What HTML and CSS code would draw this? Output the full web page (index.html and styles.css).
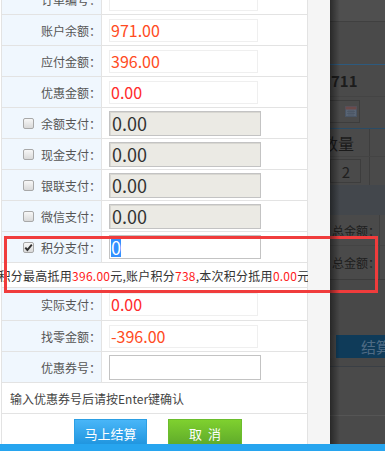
FILE: index.html
```html
<!DOCTYPE html>
<html lang="zh-CN">
<head>
<meta charset="utf-8">
<title>结算</title>
<link rel="stylesheet" href="styles.css">
</head>
<body>
<div class="screen">
  <div class="main">
    <div class="sheet">
      <div class="table">
        <div class="row"><div class="lab">订单编号：</div><div class="val"><span class="box"></span></div></div>
        <div class="row"><div class="lab">账户余额：</div><div class="val"><span class="box">971.00</span></div></div>
        <div class="row"><div class="lab">应付金额：</div><div class="val"><span class="box">396.00</span></div></div>
        <div class="row"><div class="lab">优惠金额：</div><div class="val"><span class="box red">0.00</span></div></div>
        <div class="row"><div class="lab"><span class="cb"></span>余额支付：</div><div class="val"><span class="inp dis">0.00</span></div></div>
        <div class="row"><div class="lab"><span class="cb"></span>现金支付：</div><div class="val"><span class="inp dis">0.00</span></div></div>
        <div class="row"><div class="lab"><span class="cb"></span>银联支付：</div><div class="val"><span class="inp dis">0.00</span></div></div>
        <div class="row"><div class="lab"><span class="cb"></span>微信支付：</div><div class="val"><span class="inp dis">0.00</span></div></div>
        <div class="row"><div class="lab"><span class="cb"><svg width="9" height="9" viewBox="0 0 9 9"><path d="M1.3 4.6 L3.4 7 L7.8 1.6" fill="none" stroke="#2e2e2e" stroke-width="1.9"/></svg></span>积分支付：</div><div class="val"><span class="inp edit"><span class="sel">0</span></span></div></div>
        <div class="row note"><span>积分最高抵用<em>396.00</em>元,账户积分<em>738</em>,本次积分抵用<em>0.00</em>元</span></div>
        <div class="row tall"><div class="lab">实际支付：</div><div class="val"><span class="box red">0.00</span></div></div>
        <div class="row"><div class="lab">找零金额：</div><div class="val"><span class="box">-396.00</span></div></div>
        <div class="row"><div class="lab">优惠券号：</div><div class="val"><span class="inp coupon"></span></div></div>
        <div class="row hint">输入优惠券号后请按Enter键确认</div>
        <div class="actions">
          <button class="btn blue">马上结算</button>
          <button class="btn green">取&nbsp;&nbsp;消</button>
        </div>
      </div>
    </div>
    <div class="strip"></div>
    <div class="backdrop">
      <div class="d1"></div>
      <div class="d2"></div>
      <div class="d3">711</div>
      <div class="d4"><span class="date"><svg width="12" height="11" viewBox="0 0 12 11"><rect x="0.5" y="0.5" width="11" height="10" fill="#5f6f86" stroke="#4a5a70"/><rect x="0.5" y="0.5" width="11" height="3" fill="#7a4a4a"/><path d="M2 5.5h8M2 7.5h8M4 4v6M6 4v6M8 4v6" stroke="#4b5a6e" stroke-width="0.7"/></svg></span></div>
      <div class="d5"><div class="c1">数量</div><div class="c2"></div></div>
      <div class="d6"><div class="c1"><span class="qty">2</span></div><div class="c2"></div></div>
      <div class="d7"></div>
      <div class="d8"><span class="tl">总金额：</span></div>
      <div class="d9"><span class="tl">总金额：</span></div>
      <div class="d10"></div>
      <div class="dbtn">结算</div>
      <div class="d11"></div>
      <div class="d12"></div>
    </div>
  </div>
  <div class="bar"></div>
  <div class="mark"></div>
</div>
</body>
</html>
```
FILE: styles.css
```css
html, body {
  margin: 0;
  padding: 0;
}
body {
  font-family: "Noto Sans CJK SC", "Noto Sans", sans-serif;
  background: #ffffff;
}
.screen {
  position: relative;
  width: 385px;
  height: 451px;
  overflow: hidden;
  display: flex;
  flex-direction: column;
}
.main {
  height: 444px;
  display: flex;
  overflow: hidden;
}
.sheet {
  width: 308px;
  padding-left: 1px;
  box-sizing: border-box;
  background: #fff;
  overflow: hidden;
}
.table {
  margin-top: -16px;
  border-left: 1px solid #e3e3e3;
  border-right: 1px solid #e3e3e3;
}
.row {
  display: flex;
  height: 31px;
  box-sizing: border-box;
  border-bottom: 1px solid #e3e3e3;
}
.row.tall { height: 33px; }
.lab {
  width: 100px;
  box-sizing: border-box;
  border-right: 1px solid #e3e3e3;
  background: #f0f7fe;
  display: flex;
  align-items: center;
  justify-content: flex-end;
  font-size: 12px;
  color: #555;
  white-space: nowrap;
}
.cb {
  width: 11px;
  height: 11px;
  box-sizing: border-box;
  border: 1px solid #a8a8a8;
  border-radius: 2px;
  background: linear-gradient(#f7f7f7, #d9d9d9);
  margin-left: 21px;
  margin-right: auto;
  display: flex;
  align-items: center;
  justify-content: center;
}
.cb svg { display: block; }
.val {
  flex: 1;
  display: flex;
  align-items: center;
  padding-left: 7px;
}
.box {
  width: 149px;
  height: 23px;
  box-sizing: border-box;
  border: 1px solid #efefef;
  font-size: 16px;
  line-height: 21px;
  color: #ff4b22;
  padding-left: 1px;
}
.box.red { color: #ff2b2b; }
.inp {
  width: 152px;
  height: 25px;
  box-sizing: border-box;
  border: 1px solid #c3c3c3;
  font-size: 18px;
  line-height: 23px;
  color: #333;
  padding-left: 2px;
}
.inp.dis {
  background: #ebeae4;
  box-shadow: inset 1px 1px 0 #d8d7d1;
}
.inp.edit {
  height: 24px;
  background: #fff;
  line-height: 22px;
  padding-left: 1px;
}
.sel {
  background: #3390ff;
  color: #fff;
  display: inline-block;
  line-height: 20px;
  width: 10px;
}
.inp.coupon { background: #fff; }
.note {
  height: 25px;
  justify-content: center;
  align-items: center;
  white-space: nowrap;
  font-size: 12px;
  color: #333;
}
.note span {
  flex-shrink: 0;
  margin-left: -1px;
  letter-spacing: 0.25px;
}
.note em {
  font-style: normal;
  color: #ff1a1a;
}
.hint {
  align-items: center;
  padding-left: 8px;
  font-size: 12px;
  color: #444;
}
.actions {
  display: flex;
  gap: 21px;
  padding: 5px 0 0 72px;
}
.btn {
  width: 73px;
  height: 29px;
  border: 1px solid transparent;
  font-family: "Noto Sans CJK SC", sans-serif;
  font-size: 13px;
  color: #fff;
  padding: 0;
}
.btn.blue {
  background: linear-gradient(#49b6f8, #1c92dc);
  border-color: #2b9fe4;
}
.btn.green {
  width: 74px;
  background: linear-gradient(#7fd02f, #5ca72a);
  border-color: #6bbd2d;
}
.strip {
  width: 22px;
  background: #f5f5f5;
}
.backdrop {
  flex: 1;
  position: relative;
  background: #4a4a4a;
  display: flex;
  flex-direction: column;
  overflow: hidden;
  font-family: "Noto Sans CJK SC", sans-serif;
}
.backdrop::before {
  content: "";
  position: absolute;
  left: 0;
  top: 0;
  bottom: 0;
  width: 10px;
  background: linear-gradient(to right, rgba(0,0,0,0.45), rgba(0,0,0,0));
  z-index: 2;
}
.d1 {
  height: 22px;
  box-sizing: border-box;
  background: #4f4f4f;
  border-bottom: 1px solid #404040;
}
.d2 {
  height: 43px;
  box-sizing: border-box;
  border-bottom: 1px solid #2d5a7e;
}
.d3 {
  height: 32px;
  box-sizing: border-box;
  border-bottom: 1px solid #444;
  display: flex;
  align-items: center;
  font-size: 15px;
  font-weight: bold;
  color: #1c1c1c;
  padding-left: 1px;
}
.d4 {
  height: 32px;
  box-sizing: border-box;
  border-bottom: 1px solid #2a4c66;
  padding-top: 3px;
}
.date {
  display: flex;
  justify-content: flex-end;
  align-items: center;
  width: 38px;
  height: 23px;
  margin-left: -8px;
  box-sizing: border-box;
  border: 1px solid #3d3d3d;
  padding-right: 2px;
}
.date svg { opacity: 0.7; }
.d5, .d6 {
  height: 28px;
  box-sizing: border-box;
  display: flex;
}
.d5 { border-bottom: 1px solid #444; }
.c1 {
  width: 40px;
  box-sizing: border-box;
  border-right: 1px solid #3e3e3e;
  display: flex;
  align-items: center;
}
.d5 .c1 {
  font-size: 16px;
  color: #1a1a1a;
  margin-left: -8px;
  width: 48px;
}
.qty {
  width: 31px;
  height: 24px;
  box-sizing: border-box;
  border: 1px solid #3d3d3d;
  display: flex;
  align-items: center;
  justify-content: flex-end;
  padding-right: 10px;
  font-size: 15px;
  color: #202020;
}
.d7 {
  height: 30px;
  background: #43474c;
}
.d8, .d9 {
  height: 31px;
  box-sizing: border-box;
  border-bottom: 1px solid #444;
  display: flex;
  align-items: center;
}
.d9 { height: 34px; border-bottom-color: #3c3c3c; }
.tl {
  width: 50px;
  box-sizing: border-box;
  padding-left: 2px;
  border-right: 1px solid #3f3f3f;
  align-self: stretch;
  display: flex;
  align-items: center;
  font-size: 12px;
  color: #1e1e1e;
  white-space: nowrap;
}
.d10 {
  height: 55px;
  background: #484848;
}
.dbtn {
  height: 23px;
  margin-left: 6px;
  background: #0f3b59;
  color: #4f6b84;
  font-size: 15px;
  line-height: 23px;
  padding-left: 25px;
  white-space: nowrap;
}
.d11 {
  height: 9px;
  box-sizing: border-box;
  background: #484848;
  border-bottom: 1px solid #3a3f45;
}
.d12 {
  height: 49px;
  box-sizing: border-box;
  border-bottom: 1px solid #555;
}
.bar {
  height: 7px;
  background: #27a5ef;
}
.mark {
  position: absolute;
  left: 4px;
  top: 236px;
  width: 374px;
  height: 57px;
  box-sizing: border-box;
  border: 3px solid #f03c3c;
}
```
